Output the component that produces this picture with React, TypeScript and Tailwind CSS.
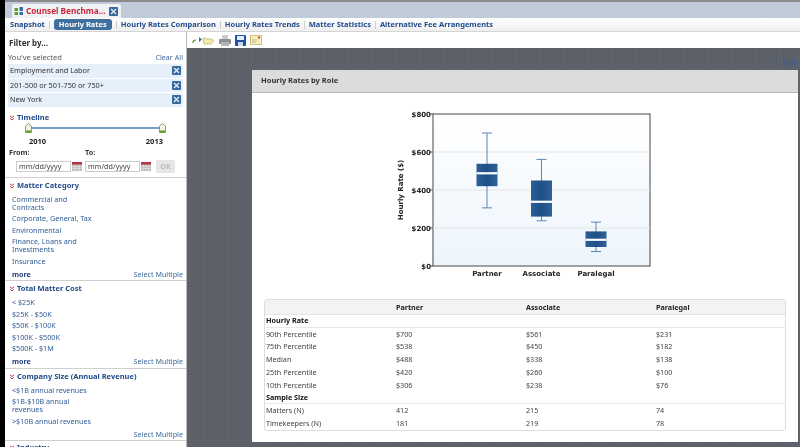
import React from "react";

const Xb = ({ className = "" }: { className?: string }) => (
  <span className={`flex h-[9px] w-[9px] items-center justify-center rounded-[1px] bg-[#35689f] ${className}`}>
    <svg width="7" height="7" viewBox="0 0 7 7"><path d="M1 1l5 5M6 1L1 6" stroke="#e8eef6" strokeWidth="1.3" /></svg>
  </span>
);

const Chev = () => (
  <svg width="6" height="6" viewBox="0 0 6 6" className="shrink-0">
    <path d="M1 .8l2 1.7L5 .8M1 3.3L3 5l2-1.7" fill="none" stroke="#c8343c" strokeWidth="1" />
  </svg>
);

const SectionHead = ({ children }: { children: React.ReactNode }) => (
  <div className="flex h-[13px] shrink-0 items-center gap-[2px] pl-[4px] text-[7.5px] font-bold text-[#1f4a8a]">
    <Chev />
    {children}
  </div>
);

const Item = ({ children }: { children: React.ReactNode }) => (
  <div className="mb-[3.5px] w-[80px] whitespace-nowrap pl-[7px] text-[7.2px] leading-[8px] text-[#2f5c96]">{children}</div>
);

const Foot = ({ more = true }: { more?: boolean }) => (
  <div className="flex h-[12px] items-center justify-between pl-[7px] pr-[3px] text-[7.2px] text-[#3f6a9c]">
    <span className="font-bold text-[#1f3f7f]">{more ? "more" : ""}</span>
    <span>Select Multiple</span>
  </div>
);

const Section = ({ title, items, more = true }: { title: string; items: React.ReactNode[]; more?: boolean }) => (
  <div className="flex shrink-0 flex-col border-b border-[#cfcfcf] pt-[1.5px]">
    <SectionHead>{title}</SectionHead>
    <div className="pt-[2.5px]">{items.map((t, i) => <Item key={i}>{t}</Item>)}</div>
    <Foot more={more} />
  </div>
);

const Selected = ({ children }: { children: React.ReactNode }) => (
  <div className="flex h-[13.5px] items-center justify-between bg-[#e6f0fb] pl-[2px] pr-[2px] text-[7.3px] text-[#333]">
    <span>{children}</span>
    <Xb />
  </div>
);

const Handle = ({ className }: { className: string }) => (
  <svg width="7" height="11" viewBox="0 0 7 11" className={`absolute top-[-4px] ${className}`}>
    <path d="M3.5.5L6.5 3v6.5h-6V3z" fill="#f2f2ea" stroke="#5aa02c" strokeWidth=".8" />
    <path d="M.8 7.5h5.4v2h-5.4z" fill="#5aa02c" />
  </svg>
);

const Cal = () => (
  <svg width="10" height="9" viewBox="0 0 10 9" className="shrink-0">
    <rect width="10" height="9" fill="#bbb" />
    <rect width="10" height="2.5" fill="#b8323c" />
    <path d="M0 4.5h10M0 6.5h10M2.5 3v6M5 3v6M7.5 3v6" stroke="#eee" strokeWidth=".5" />
  </svg>
);

const DateBox = () => (
  <div className="flex h-[11px] w-[55px] items-center border border-[#ccc] pl-[2px] text-[7.2px] text-[#444]">mm/dd/yyyy</div>
);

const Sidebar = () => (
  <aside className="flex h-full w-[182px] shrink-0 flex-col overflow-hidden border-r border-[#b8b8b8] bg-white">
    <div className="flex h-[17px] shrink-0 items-end pl-[4px] text-[8px] font-bold text-[#333]">Filter by...</div>
    <div className="mt-[3px] flex h-[11px] shrink-0 items-center justify-between pl-[3px] pr-[3px] text-[7.5px] text-[#555]">
      <span>You've selected</span>
      <span className="text-[7.2px] text-[#3f6a9c]">Clear All</span>
    </div>
    <div className="flex shrink-0 flex-col gap-[1px] pl-[3px] pr-[3px] pt-[1px]">
      <Selected>Employment and Labor</Selected>
      <Selected>201-500 or 501-750 or 750+</Selected>
      <Selected>New York</Selected>
    </div>
    <div className="mt-[5px] h-[66px] shrink-0 border-b border-[#cfcfcf]">
      <SectionHead>Timeline</SectionHead>
      <div className="relative ml-[23px] mt-[2px] h-[2px] w-[135px] bg-[#7a9cc6]">
        <Handle className="left-[-3px]" />
        <Handle className="right-[-3px]" />
      </div>
      <div className="mt-[7px] flex w-[158px] justify-between pl-[24px] text-[7.5px] font-bold text-[#222]">
        <span>2010</span><span>2013</span>
      </div>
      <div className="mt-[1px] flex h-[10px] items-center text-[7.2px] font-bold text-[#333]">
        <span className="w-[80px] pl-[4px]">From:</span><span>To:</span>
      </div>
      <div className="mt-[2px] flex items-center pl-[11px]">
        <DateBox />
        <span className="ml-[1px] mr-[3px]"><Cal /></span>
        <DateBox />
        <span className="ml-[1px] mr-[5px]"><Cal /></span>
        <div className="flex h-[13px] w-[19px] items-center justify-center rounded-[1px] bg-[#e6e6e6] text-[7.2px] font-bold text-[#bdbdbd]">OK</div>
      </div>
    </div>
    <Section title="Matter Category" items={[<>Commercial and<br />Contracts</>, "Corporate, General, Tax", "Environmental", <>Finance, Loans and<br />Investments</>, "Insurance"]} />
    <Section title="Total Matter Cost" items={["< $25K", "$25K - $50K", "$50K - $100K", "$100K - $500K", "$500K - $1M"]} />
    <Section title="Company Size (Annual Revenue)" more={false} items={["<$1B annual revenues", <>$1B-$10B annual<br />revenues</>, ">$10B annual revenues"]} />
    <SectionHead>Industry</SectionHead>
  </aside>
);

const Sep = () => <span className="mx-[4px] h-[8px] w-px shrink-0 bg-[#ccc]" />;

const Nav = () => {
  const items = ["Hourly Rates Comparison", "Hourly Rates Trends", "Matter Statistics", "Alternative Fee Arrangements"];
  return (
    <nav className="flex h-[14px] shrink-0 items-center border-b border-[#d4d4d4] bg-gradient-to-b from-white to-[#efefef] pl-[5px] text-[7.5px] font-bold text-[#1f4a8a]">
      <span>Snapshot</span>
      <Sep />
      <span className="flex h-[11px] w-[58px] items-center justify-center rounded-[3px] bg-[#3f6f9f] text-white">Hourly Rates</span>
      <Sep />
      {items.map((t, i) => (
        <React.Fragment key={t}>
          {i > 0 && <Sep />}
          <span>{t}</span>
        </React.Fragment>
      ))}
    </nav>
  );
};

const Toolbar = () => (
  <div className="flex h-[16px] shrink-0 items-center gap-[4px] bg-white pl-[5px]">
    <svg width="22" height="10" viewBox="0 0 22 10" className="mr-[1px]">
      <path d="M1 8c0-2 1-3 3-3" fill="none" stroke="#4c9a2a" strokeWidth="1.2" />
      <path d="M7 2l3 2.5L7 7z" fill="#2f6fb0" />
      <path d="M11 3h3l1 1h5l1.5 2-2.5 3h-7z" fill="#f3e9a8" stroke="#b9a55a" strokeWidth=".6" />
    </svg>
    <svg width="12" height="11" viewBox="0 0 12 11">
      <rect x="3" y="0" width="6" height="4" fill="#ccc" />
      <rect x="0" y="4" width="12" height="5" rx="1" fill="#8b9096" />
      <rect x="2" y="7" width="8" height="4" fill="#b5b5b5" />
    </svg>
    <svg width="11" height="11" viewBox="0 0 11 11">
      <rect width="11" height="11" rx="1" fill="#1f50a8" />
      <rect x="2" y="1" width="7" height="4" fill="#e8eef6" />
      <rect x="3" y="7" width="5" height="4" fill="#cfd8e8" />
    </svg>
    <svg width="12" height="10" viewBox="0 0 12 10">
      <rect x=".5" y=".5" width="11" height="9" fill="#f6eec0" stroke="#cfc08a" />
      <path d="M2 5h5M2 7h4" stroke="#bba97a" strokeWidth=".8" />
      <rect x="8" y="1.5" width="2" height="2" fill="#c0502f" />
    </svg>
  </div>
);

const Chart = () => {
  const y = (v: number) => 161 - v * 0.19;
  const boxes = [
    { x: 87, lo: 306, q1: 420, m: 488, q3: 538, hi: 700, l: "Partner" },
    { x: 141.5, lo: 238, q1: 260, m: 338, q3: 450, hi: 561, l: "Associate" },
    { x: 196, lo: 76, q1: 100, m: 138, q3: 182, hi: 231, l: "Paralegal" },
  ];
  return (
    <svg width="268" height="180" viewBox="-8 0 268 180" className="ml-[140px] mt-[12px] shrink-0" fontFamily="'DejaVu Sans', sans-serif">
      <defs>
        <linearGradient id="plot" x1="0" y1="0" x2="0" y2="1">
          <stop offset="0" stopColor="#ffffff" />
          <stop offset="1" stopColor="#edf5fc" />
        </linearGradient>
        <linearGradient id="bx" x1="0" y1="0" x2="1" y2="0">
          <stop offset="0" stopColor="#2c5f98" />
          <stop offset=".5" stopColor="#1f4f86" />
          <stop offset="1" stopColor="#2f6299" />
        </linearGradient>
      </defs>
      <rect x="33" y="9" width="217" height="152" fill="url(#plot)" stroke="#444" strokeWidth="1" />
      {[200, 400, 600].map((v) => <line key={v} x1="33" x2="250" y1={y(v)} y2={y(v)} stroke="#e2e6e9" strokeWidth="1" />)}
      {[0, 200, 400, 600, 800].map((v) => (
        <g key={v}>
          <line x1="30" x2="33" y1={y(v)} y2={y(v)} stroke="#555" />
          <text x="31" y={y(v) + 2.5} textAnchor="end" fontSize="7" fontWeight="700" fill="#222">${v}</text>
        </g>
      ))}
      <text transform="translate(3 85) rotate(-90)" textAnchor="middle" fontSize="7" fontWeight="700" fill="#222">Hourly Rate ($)</text>
      {boxes.map((b) => (
        <g key={b.l}>
          <line x1={b.x} x2={b.x} y1={y(b.hi)} y2={y(b.lo)} stroke="#5f86b0" strokeWidth="1" />
          <line x1={b.x - 5} x2={b.x + 5} y1={y(b.hi)} y2={y(b.hi)} stroke="#5f86b0" strokeWidth="1" />
          <line x1={b.x - 5} x2={b.x + 5} y1={y(b.lo)} y2={y(b.lo)} stroke="#5f86b0" strokeWidth="1" />
          <rect x={b.x - 10.5} y={y(b.q3)} width="21" height={y(b.q1) - y(b.q3)} fill="url(#bx)" />
          <line x1={b.x - 10.5} x2={b.x + 10.5} y1={y(b.m)} y2={y(b.m)} stroke="#fff" strokeWidth="2.2" />
          <text x={b.x} y="171" textAnchor="middle" fontSize="7" fontWeight="700" fill="#222">{b.l}</text>
        </g>
      ))}
    </svg>
  );
};

const rows: { l: string; v?: string[] }[] = [
  { l: "Hourly Rate" },
  { l: "90th Percentile", v: ["$700", "$561", "$231"] },
  { l: "75th Percentile", v: ["$538", "$450", "$182"] },
  { l: "Median", v: ["$488", "$338", "$138"] },
  { l: "25th Percentile", v: ["$420", "$260", "$100"] },
  { l: "10th Percentile", v: ["$306", "$238", "$76"] },
  { l: "Sample Size" },
  { l: "Matters (N)", v: ["412", "215", "74"] },
  { l: "Timekeepers (N)", v: ["181", "219", "78"] },
];

const DataTable = () => (
  <div className="ml-[12px] mt-[14px] w-[522px] overflow-hidden rounded-[3px] border border-[#ddd] pl-[1px] text-[7.2px] text-[#444]">
    <div className="-ml-[1px] grid h-[15px] grid-cols-[131px_130px_130px_1fr] items-center border-b border-[#e4e4e4] bg-[#f3f3f3] font-bold text-[#222]">
      <span /><span>Partner</span><span>Associate</span><span>Paralegal</span>
    </div>
    {rows.map((r) => (
      <div key={r.l} className={`grid h-[12.75px] grid-cols-[130px_130px_130px_1fr] items-center ${r.v ? "" : "border-b border-[#e8e8e8]"}`}>
        <span className={r.v ? "" : "font-bold text-[#111]"}>{r.l}</span>
        {r.v?.map((x, i) => <span key={i}>{x}</span>)}
      </div>
    ))}
  </div>
);

const Card = () => (
  <section className="ml-[65px] mr-[2px] flex h-[372px] flex-col rounded-t-[2px] bg-white">
    <div className="flex h-[23px] shrink-0 items-center border-b border-[#b5b5b5] bg-[#dcdcdc] pl-[9px] text-[7.5px] font-bold text-[#333]">Hourly Rates by Role</div>
    <Chart />
    <DataTable />
  </section>
);

export default function App() {
  return (
    <div className="flex h-[447px] w-[800px] overflow-hidden bg-[#c0cad8] font-['DejaVu_Sans',sans-serif] blur-[0.3px]">
      <div className="w-[5px] shrink-0 bg-black" />
      <div className="flex min-w-0 flex-1 flex-col">
        <div className="h-[2px] shrink-0 bg-[#8a8a8a]" />
        <div className="flex h-[16px] shrink-0 items-end pl-[7px]">
          <div className="flex h-[14px] w-[109px] items-center gap-[2px] rounded-t-[2px] bg-[#f0f2f4] pl-[2px] text-[8.2px] font-bold text-[#c8283c]">
            <svg width="10" height="9" viewBox="0 0 10 9" className="shrink-0">
              <rect x="0.5" y="1" width="3.5" height="3" fill="#5aa02c" /><rect x="0.5" y="5" width="3.5" height="3" fill="#5aa02c" />
              <rect x="5.5" y="0" width="3.5" height="4" fill="#2f6fb0" /><rect x="5.5" y="5" width="3.5" height="3" fill="#2f6fb0" />
            </svg>
            <span className="whitespace-nowrap">Counsel Benchma...</span>
            <Xb className="ml-auto mr-[3px]" />
          </div>
        </div>
        <Nav />
        <div className="flex min-h-0 flex-1">
          <Sidebar />
          <div className="flex min-w-0 flex-1 flex-col">
            <Toolbar />
            <main className="min-h-0 flex-1 bg-[#5c6068] bg-[repeating-linear-gradient(90deg,rgba(255,255,255,.03)_0_1px,transparent_1px_3px),repeating-linear-gradient(0deg,rgba(0,0,0,.04)_0_1px,transparent_1px_4px)]">
              <div className="flex h-[22px] items-end justify-end pb-[2px] pr-[3px] text-[8px] text-[#2a5fa8]">Tips</div>
              <Card />
            </main>
          </div>
        </div>
      </div>
    </div>
  );
}
